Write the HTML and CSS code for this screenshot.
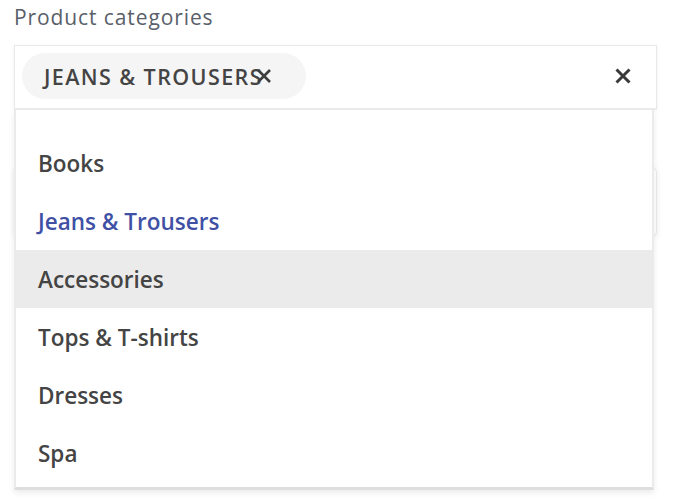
FILE: index.html
```html
<!DOCTYPE html>
<html>
<head>
<meta charset="utf-8">
<link rel="stylesheet" href="styles.css">
</head>
<body>
<div class="page">
  <div class="label">Product categories</div>
  <div class="field">
    <div class="select">
      <div class="chip"><span class="chip-text">JEANS &amp; TROUSERS</span><svg class="chip-x" width="16" height="16" viewBox="0 0 16 16"><path d="M2 2 L14 14 M14 2 L2 14" stroke="#3d3d3d" stroke-width="2.6"/></svg></div>
      <svg class="clear" width="18" height="18" viewBox="0 0 18 18"><path d="M2.5 2.5 L15.5 15.5 M15.5 2.5 L2.5 15.5" stroke="#3a3a3a" stroke-width="3"/></svg>
    </div>
    <ul class="menu">
      <li class="item">Books</li>
      <li class="item selected">Jeans &amp; Trousers</li>
      <li class="item hover">Accessories</li>
      <li class="item">Tops &amp; T-shirts</li>
      <li class="item">Dresses</li>
      <li class="item">Spa</li>
    </ul>
  </div>
  <div class="behind"></div>
</div>
</body>
</html>
```
FILE: styles.css
```css
html, body {
  margin: 0;
  padding: 0;
  background: #ffffff;
}
body {
  min-height: 504px;
}
.page {
  padding: 0 23px 0 14px;
  font-family: "Open Sans", "Noto Sans", sans-serif;
}
.label {
  font-size: 21px;
  line-height: 26px;
  padding-top: 4px;
  color: #596069;
  letter-spacing: 0.9px;
  height: 41px;
}
.field {
  position: relative;
}
.select {
  height: 62px;
  border: 1px solid #e9e9e9;
  border-bottom: 2px solid #ebebeb;
  box-shadow: 0 1px 4px rgba(0,0,0,0.06);
  display: flex;
  align-items: center;
  padding: 0 24px 0 7px;
  background: #fff;
}
.chip {
  height: 46px;
  border-radius: 23px;
  background: #f5f5f5;
  display: flex;
  align-items: center;
  padding: 0 34px 0 22px;
  margin-top: -2px;
}
.chip-text {
  font-size: 21.5px;
  font-weight: 600;
  color: #444444;
  letter-spacing: 1.4px;
}
.chip-x {
  margin-left: -7px;
}
.clear {
  margin-left: auto;
  margin-top: -2px;
}
.menu {
  position: absolute;
  top: 65px;
  left: 0;
  right: 3px;
  margin: 0;
  padding: 24px 0 5px;
  list-style: none;
  background: #fff;
  border-left: 2px solid #ebebeb;
  border-right: 2px solid #ebebeb;
  border-bottom: 3px solid #dedede;
  box-shadow: 0 3px 6px rgba(0,0,0,0.08);
  z-index: 2;
}
.item {
  height: 58px;
  display: flex;
  align-items: center;
  padding-left: 22px;
  font-size: 22.5px;
  font-weight: 600;
  color: #444444;
}
.item.selected {
  color: #3f51a5;
}
.item.hover {
  background: #ebebeb;
}
.behind {
  margin-top: 58px;
  height: 66px;
  border: 1px solid #e9e9e9;
  border-radius: 4px;
  box-shadow: 0 1px 6px rgba(0,0,0,0.08);
}
```
